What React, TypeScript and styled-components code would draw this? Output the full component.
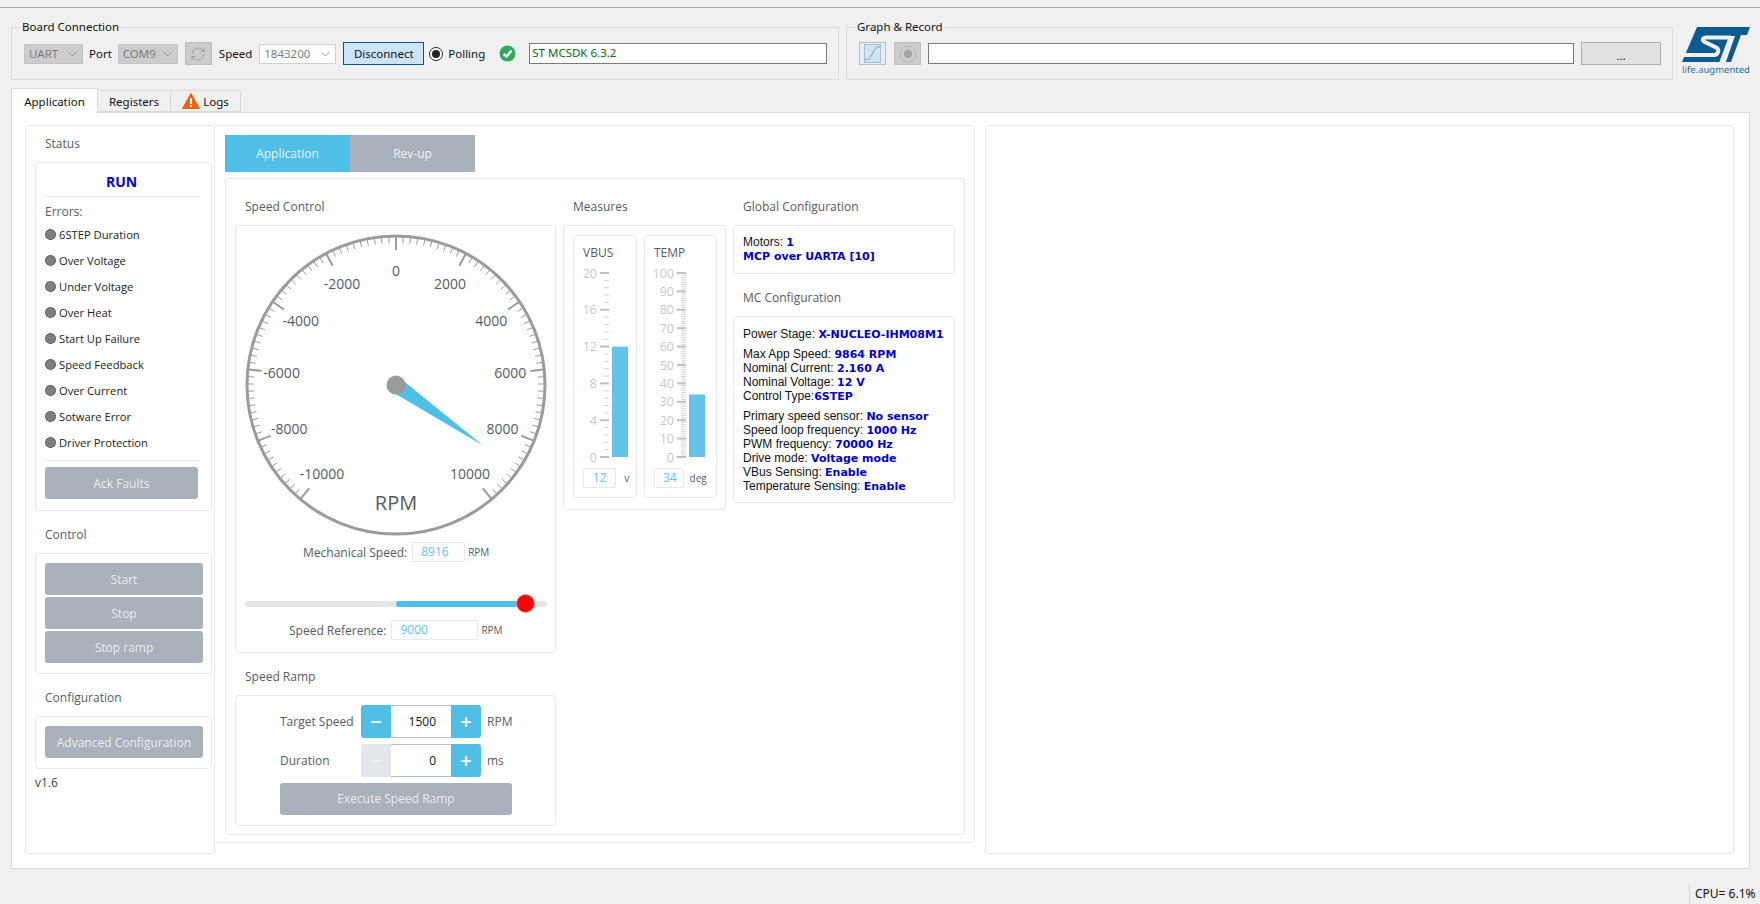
import React from 'react'
import styled, { createGlobalStyle } from 'styled-components'
import { RefreshCw } from 'lucide-react'

const GlobalStyle = createGlobalStyle`
  html, body { margin: 0; padding: 0; background: #f0f0f0; }
  * { box-sizing: border-box; }
`

const BLUE = '#4fbfe8'
const GREY_BTN = '#a9b1bc'
const LINE = '#e8e8e8'
const QT_FONT = `"Noto Sans", "Open Sans", sans-serif`
const WEB_FONT = `"Open Sans", "Noto Sans", sans-serif`

const Page = styled.div`
  width: 1760px;
  height: 904px;
  overflow: hidden;
  background: #f0f0f0;
  font-family: ${QT_FONT};
  font-size: 11.5px;
  color: #111;
`
const TopRule = styled.div`
  height: 8px;
  border-bottom: 1px solid #a8a8a8;
`
const Toolbar = styled.div`
  display: flex;
  align-items: flex-start;
  padding: 19px 0 0 11px;
  height: 72px;
`
const GroupBox = styled.div<{ $width: number; $ml?: number }>`
  position: relative;
  display: flex;
  align-items: center;
  width: ${p => p.$width}px;
  height: 53px;
  margin-left: ${p => p.$ml || 0}px;
  padding-left: 12px;
  border: 1px solid #dcdcdc;
`
const GroupLabel = styled.span`
  position: absolute;
  top: -9px;
  left: 8px;
  padding: 0 2px;
  line-height: 16px;
  background: #f0f0f0;
`
const Combo = styled.div<{ $width: number; $ml?: number; $white?: boolean }>`
  display: flex;
  align-items: center;
  justify-content: space-between;
  width: ${p => p.$width}px;
  height: 20px;
  margin-left: ${p => p.$ml || 0}px;
  padding: 0 5px 0 4px;
  background: ${p => (p.$white ? '#fff' : '#cccccc')};
  border: 1px solid ${p => (p.$white ? '#cfcfcf' : '#c4c4c4')};
  color: #7d7d7d;
`
const Caption = styled.span<{ $ml: number }>`
  margin-left: ${p => p.$ml}px;
`
const IconButton = styled.div<{ $ml: number; $active?: boolean }>`
  display: flex;
  align-items: center;
  justify-content: center;
  width: 27px;
  height: 23px;
  margin-left: ${p => p.$ml}px;
  background: ${p => (p.$active ? '#e4eef8' : '#cccccc')};
  border: 1px solid #bdbdbd;
  color: #8b8b8b;
`
const DisconnectButton = styled.div`
  display: flex;
  align-items: center;
  justify-content: center;
  width: 81px;
  height: 23px;
  margin-left: 7px;
  background: #cce4f7;
  border: 1px solid #005499;
`
const Radio = styled.span`
  display: flex;
  align-items: center;
  justify-content: center;
  width: 14px;
  height: 14px;
  margin-left: 5px;
  background: #fff;
  border: 1px solid #222;
  border-radius: 50%;
  &::after {
    content: '';
    width: 8px;
    height: 8px;
    border-radius: 50%;
    background: #222;
  }
`
const PathInput = styled.div<{ $width: number; $ml: number }>`
  width: ${p => p.$width}px;
  height: 21px;
  margin-left: ${p => p.$ml}px;
  padding-left: 2px;
  line-height: 18px;
  background: #fff;
  border: 1px solid #7a7a7a;
  color: #0a6a12;
`
const BrowseButton = styled.div`
  display: flex;
  align-items: center;
  justify-content: center;
  width: 80px;
  height: 23px;
  margin-left: 7px;
  padding-top: 3px;
  background: #e1e1e1;
  border: 1px solid #adadad;
`
const Logo = styled.div`
  display: flex;
  flex-direction: column;
  align-items: center;
  gap: 2px;
  width: 76px;
  margin-left: 5px;
  color: #2a6c9c;
  font-size: 9.5px;
  line-height: 10px;
`
const TabBar = styled.div`
  display: flex;
  align-items: flex-end;
  height: 24px;
  margin: 8px 0 0 11px;
`
const QtTab = styled.div<{ $width: number; $active?: boolean }>`
  display: flex;
  align-items: center;
  justify-content: center;
  gap: 3px;
  width: ${p => p.$width}px;
  height: ${p => (p.$active ? 25 : 22)}px;
  margin-bottom: ${p => (p.$active ? -1 : 0)}px;
  background: ${p => (p.$active ? '#fff' : '#f0f0f0')};
  border: 1px solid #d9d9d9;
  border-bottom: ${p => (p.$active ? 'none' : '1px solid #d9d9d9')};
  border-left: ${p => (p.$active ? '1px solid #d9d9d9' : 'none')};
  position: relative;
  z-index: ${p => (p.$active ? 1 : 0)};
`
const Pane = styled.div`
  display: flex;
  align-items: flex-start;
  width: 1739px;
  height: 757px;
  margin-left: 11px;
  padding: 12px 0 0 13px;
  background: #fff;
  border: 1px solid #d9d9d9;
  font-family: ${WEB_FONT};
  font-size: 12px;
  color: #222;
`
const SidePanel = styled.div`
  width: 190px;
  height: 729px;
  padding: 8px 0 0 9px;
  border: 1px solid ${LINE};
  border-radius: 3px;
`
const MainPanel = styled.div`
  width: 761px;
  height: 718px;
  margin-left: -1px;
  padding: 9px 0 0 10px;
  border: 1px solid ${LINE};
  border-radius: 3px;
`
const BlankPanel = styled.div`
  width: 749px;
  height: 729px;
  margin-left: 10px;
  border: 1px solid ${LINE};
  border-radius: 3px;
`
const SectionTitle = styled.div<{ $mt?: number }>`
  height: 19px;
  margin: ${p => p.$mt || 0}px 0 9px 10px;
  font-size: 12px;
  line-height: 19px;
  color: #555c64;
`
const Card = styled.div<{ $height: number; $width?: number; $pad?: string }>`
  width: ${p => (p.$width ? `${p.$width}px` : 'auto')};
  height: ${p => p.$height}px;
  padding: ${p => p.$pad || '9px'};
  border: 1px solid ${LINE};
  border-radius: 4px;
`
const RunState = styled.div`
  width: 153px;
  height: 25px;
  text-align: center;
  font-size: 14px;
  font-weight: 700;
  line-height: 20px;
  color: #0000d8;
  border-bottom: 1px solid ${LINE};
`
const ErrorsCaption = styled.div`
  height: 18px;
  margin-top: 6px;
  line-height: 18px;
  color: #555c64;
`
const ErrorRow = styled.div`
  display: flex;
  align-items: center;
  gap: 3px;
  height: 26px;
  font-size: 11.2px;
  color: #222;
`
const Led = styled.span`
  flex: none;
  width: 11px;
  height: 11px;
  border-radius: 50%;
  background: #7f7f7f;
  border: 1px solid #5c5c5c;
`
const ErrorsEnd = styled.div`
  width: 153px;
  margin-top: 5px;
  border-top: 1px solid ${LINE};
`
const GreyButton = styled.div<{ $width: number; $mt?: number }>`
  display: flex;
  align-items: center;
  justify-content: center;
  width: ${p => p.$width}px;
  height: 32px;
  margin-top: ${p => p.$mt || 0}px;
  background: ${GREY_BTN};
  border-radius: 3px;
  color: #e9ecef;
  font-size: 12px;
`
const Version = styled.div`
  margin-top: 6px;
  font-size: 12px;
  line-height: 16px;
  color: #444;
`
const InnerTabs = styled.div`
  display: flex;
  height: 37px;
`
const InnerTab = styled.div<{ $active?: boolean }>`
  display: flex;
  align-items: center;
  justify-content: center;
  width: 125px;
  background: ${p => (p.$active ? BLUE : GREY_BTN)};
  color: #eef3f6;
  font-size: 12px;
`
const TabBody = styled.div`
  display: flex;
  gap: 7px;
  width: 740px;
  height: 657px;
  margin-top: 6px;
  padding: 18px 0 0 9px;
  border: 1px solid ${LINE};
  border-radius: 3px;
`
const Column = styled.div<{ $width: number }>`
  width: ${p => p.$width}px;
`
const GaugeSvg = styled.svg`
  display: block;
  margin: 0 auto;
`
const GaugeLabel = styled.text<{ $size?: number }>`
  font-family: ${WEB_FONT};
  font-size: ${p => p.$size || 14}px;
  fill: #565b62;
  text-anchor: middle;
  dominant-baseline: central;
`
const ReadoutRow = styled.div<{ $pl: number; $mt: number }>`
  display: flex;
  align-items: center;
  height: 20px;
  margin-top: ${p => p.$mt}px;
  padding-left: ${p => p.$pl}px;
  color: #555c64;
`
const Readout = styled.div<{ $width: number; $center?: boolean }>`
  width: ${p => p.$width}px;
  height: 20px;
  margin: 0 3px 0 5px;
  padding: 0 8px;
  border: 1px solid ${LINE};
  border-radius: 2px;
  color: #62c3ea;
  font-size: 12px;
  line-height: 18px;
  text-align: ${p => (p.$center ? 'center' : 'left')};
`
const Unit = styled.span`
  font-size: 10px;
  color: #555c64;
`
const SliderTrack = styled.div`
  position: relative;
  width: 302px;
  height: 6px;
  margin: 39px 0 0 9px;
  background: #e4e4e4;
  border-radius: 3px;
`
const SliderFill = styled.div`
  position: absolute;
  top: 0;
  bottom: 0;
  background: ${BLUE};
  border-radius: 3px 0 0 3px;
`
const SliderThumb = styled.div`
  position: absolute;
  top: -7px;
  width: 19px;
  height: 19px;
  margin-left: -9.5px;
  background: #ff0000;
  border: 1px solid #d8a0a0;
  border-radius: 50%;
`
const RampRow = styled.div<{ $mt?: number }>`
  display: flex;
  align-items: center;
  height: 33px;
  margin-top: ${p => p.$mt || 0}px;
  padding-left: 44px;
  color: #555c64;
  font-size: 12px;
`
const RampLabel = styled.span`
  width: 81px;
`
const StepperSide = styled.div<{ $disabled?: boolean; $left?: boolean }>`
  display: flex;
  align-items: center;
  justify-content: center;
  width: 30px;
  height: 33px;
  background: ${p => (p.$disabled ? '#e3e6ea' : BLUE)};
  color: ${p => (p.$disabled ? '#f1f3f5' : '#fff')};
  border-radius: ${p => (p.$left ? '3px 0 0 3px' : '0 3px 3px 0')};
  font-size: 20px;
  font-weight: 600;
`
const StepperValue = styled.div`
  width: 60px;
  height: 33px;
  padding-right: 15px;
  border-top: 1px solid #b9bec4;
  border-bottom: 1px solid #b9bec4;
  color: #111;
  text-align: right;
  line-height: 31px;
`
const RampUnit = styled.span`
  margin-left: 6px;
`
const MeterRow = styled.div`
  display: flex;
  gap: 7px;
`
const MeterCard = styled.div<{ $width: number }>`
  width: ${p => p.$width}px;
  height: 263px;
  padding: 8px 0 0;
  border: 1px solid ${LINE};
  border-radius: 4px;
`
const MeterTitle = styled.div`
  height: 18px;
  padding-left: 9px;
  line-height: 18px;
  color: #555c64;
`
const MeterSvg = styled.svg`
  display: block;
  margin-top: 3px;
`
const MeterTick = styled.text`
  font-family: ${WEB_FONT};
  font-size: 12.5px;
  fill: #c9c9c9;
  text-anchor: end;
  dominant-baseline: central;
`
const MeterFoot = styled.div`
  display: flex;
  align-items: center;
  height: 20px;
  margin-top: 3px;
  padding-left: 4px;
`
const InfoBlock = styled.div<{ $mb?: number }>`
  margin-bottom: ${p => p.$mb || 0}px;
  font-family: "Liberation Sans", Arial, sans-serif;
  font-size: 12px;
  line-height: 14px;
  color: #111;
  white-space: nowrap;
`
const Strong = styled.b`
  font-family: "DejaVu Sans", Verdana, sans-serif;
  font-size: 11px;
  line-height: 0;
  color: #0000d0;
`
const StatusBar = styled.div`
  display: flex;
  justify-content: flex-end;
  height: 20px;
  margin-top: 15px;
`
const StatusCell = styled.div`
  width: 71px;
  padding-left: 5px;
  border-left: 1px solid #d4d4d4;
  font-size: 12px;
  line-height: 20px;
  white-space: nowrap;
`

const errors = [
  '6STEP Duration', 'Over Voltage', 'Under Voltage', 'Over Heat', 'Start Up Failure',
  'Speed Feedback', 'Over Current', 'Sotware Error', 'Driver Protection',
]

const GAUGE_C = 152
const polar = (deg: number, r: number) => {
  const a = (deg * Math.PI) / 180
  return { x: GAUGE_C + r * Math.sin(a), y: GAUGE_C - r * Math.cos(a) }
}

const Gauge = ({ value }: { value: number }) => {
  const ticks: React.ReactNode[] = []
  for (let v = -10000; v <= 10000; v += 200) {
    const deg = (v / 1000) * 14
    const major = v % 2000 === 0
    const p1 = polar(deg, 149)
    const p2 = polar(deg, major ? 135 : 142)
    ticks.push(
      <line key={v} x1={p1.x} y1={p1.y} x2={p2.x} y2={p2.y} stroke="#9b9b9b" strokeWidth={major ? 2 : 1} />
    )
  }
  const labels = []
  for (let v = -10000; v <= 10000; v += 2000) {
    const p = polar((v / 1000) * 14, 115)
    labels.push(<GaugeLabel key={v} x={p.x} y={p.y}>{v}</GaugeLabel>)
  }
  const deg = (value / 1000) * 14
  const tip = polar(deg, 106)
  const b1 = polar(deg + 90, 8)
  const b2 = polar(deg - 90, 8)
  return (
    <GaugeSvg width={304} height={304} viewBox="0 0 304 304">
      <circle cx={GAUGE_C} cy={GAUGE_C} r={149} fill="none" stroke="#9b9b9b" strokeWidth={3} />
      {ticks}
      {labels}
      <GaugeLabel x={GAUGE_C} y={GAUGE_C + 117} $size={20}>RPM</GaugeLabel>
      <polygon points={`${b1.x},${b1.y} ${tip.x},${tip.y} ${b2.x},${b2.y}`} fill={BLUE} />
      <circle cx={GAUGE_C} cy={GAUGE_C} r={9.5} fill="#9b9b9b" />
    </GaugeSvg>
  )
}

interface MeterProps {
  width: number
  max: number
  major: number
  subdiv: number
  value: number
  labelX: number
}

// labelX is the right edge of the scale numbers, ticks and the bar hang off it
const Meter = ({ width, max, major, subdiv, value, labelX }: MeterProps) => {
  const scale = 184
  const y = (v: number) => 192 - (v / max) * scale
  const step = major / subdiv
  const ticks = []
  for (let i = 0; i <= Math.round(max / step); i++) {
    const v = i * step
    const isMajor = i % subdiv === 0
    ticks.push(
      <line
        key={i}
        x1={labelX + (isMajor ? 3 : 7)}
        x2={labelX + 12}
        y1={y(v)}
        y2={y(v)}
        stroke={isMajor ? '#c0c0c0' : '#d4d4d4'}
        strokeWidth={isMajor ? 2 : 1}
      />
    )
    if (isMajor) ticks.push(<MeterTick key={`l${i}`} x={labelX} y={y(v)}>{v}</MeterTick>)
  }
  return (
    <MeterSvg width={width} height={200} viewBox={`0 0 ${width} 200`}>
      {ticks}
      <rect x={labelX + 15} y={y(value)} width={16} height={192 - y(value)} fill="#63c3e8" />
    </MeterSvg>
  )
}

const StLogo = () => (
  <svg width="70" height="36" viewBox="0 0 70 36">
    <path fill="#0c5a91" d="M16 0 H69 L66 8 H60 L50 35 H1 Z" />
    <path fill="#f0f0f0" d="M48 9 H54 L44.5 36 H38 Z" />
    <path
      fill="none"
      stroke="#f0f0f0"
      strokeWidth="4"
      d="M50 10.5 H25 C22 10.5 21 13 23 14.5 L36 21 C38.5 23 37 28 33 28 H2"
    />
  </svg>
)

const CheckBadge = () => (
  <svg width="17" height="17" viewBox="0 0 17 17" style={{ marginLeft: 14 }}>
    <circle cx="8.5" cy="8.5" r="8" fill="#2fa85c" />
    <path d="M4.5 8.8 L7.5 11.6 L12.5 5.6" fill="none" stroke="#fff" strokeWidth="2.4" />
  </svg>
)

const WarnIcon = () => (
  <svg width="18" height="16" viewBox="0 0 18 16">
    <path d="M9 0.5 L17.5 15.5 H0.5 Z" fill="#f4600f" stroke="#f4600f" strokeLinejoin="round" />
    <rect x="8" y="5" width="2" height="6" fill="#fff" />
    <rect x="8" y="12" width="2" height="2" fill="#fff" />
  </svg>
)

const Chevron = () => (
  <svg width="9" height="6" viewBox="0 0 9 6">
    <path d="M0.5 1 L4.5 5 L8.5 1" fill="none" stroke="#9a9a9a" />
  </svg>
)

export default function App() {
  return (
    <Page>
      <GlobalStyle />
      <TopRule />
      <Toolbar>
        <GroupBox $width={828}>
          <GroupLabel>Board Connection</GroupLabel>
          <Combo $width={59}>UART<Chevron /></Combo>
          <Caption $ml={6}>Port</Caption>
          <Combo $width={60} $ml={6}>COM9<Chevron /></Combo>
          <IconButton $ml={7}><RefreshCw size={16} strokeWidth={1} /></IconButton>
          <Caption $ml={7}>Speed</Caption>
          <Combo $width={77} $ml={7} $white>1843200<Chevron /></Combo>
          <DisconnectButton>Disconnect</DisconnectButton>
          <Radio />
          <Caption $ml={5}>Polling</Caption>
          <CheckBadge />
          <PathInput $width={298} $ml={13}>ST MCSDK 6.3.2</PathInput>
        </GroupBox>
        <GroupBox $width={827} $ml={7}>
          <GroupLabel>Graph &amp; Record</GroupLabel>
          <IconButton $ml={0} $active>
            <svg width="17" height="19" viewBox="0 0 17 19">
              <rect x="0.5" y="0.5" width="16" height="18" fill="#cfe3f5" stroke="#a9bfd2" />
              <path d="M1 15 C5 17 6 14 8.5 9.5 C11 5 12 2 16 3" fill="none" stroke="#6e9bc4" />
            </svg>
          </IconButton>
          <IconButton $ml={8}>
            <svg width="18" height="18" viewBox="0 0 18 18">
              <circle cx="9" cy="9" r="8" fill="none" stroke="#b4b4b4" />
              <circle cx="9" cy="9" r="4" fill="#a2a2a2" />
            </svg>
          </IconButton>
          <PathInput $width={646} $ml={7} />
          <BrowseButton>...</BrowseButton>
        </GroupBox>
        <Logo>
          <StLogo />
          life.augmented
        </Logo>
      </Toolbar>
      <TabBar>
        <QtTab $width={87} $active>Application</QtTab>
        <QtTab $width={73}>Registers</QtTab>
        <QtTab $width={70}><WarnIcon />Logs</QtTab>
      </TabBar>
      <Pane>
        <SidePanel>
          <SectionTitle>Status</SectionTitle>
          <Card $width={177} $height={349}>
            <RunState>RUN</RunState>
            <ErrorsCaption>Errors:</ErrorsCaption>
            {errors.map(e => (
              <ErrorRow key={e}><Led />{e}</ErrorRow>
            ))}
            <ErrorsEnd />
            <GreyButton $width={153} $mt={6}>Ack Faults</GreyButton>
          </Card>
          <SectionTitle $mt={14}>Control</SectionTitle>
          <Card $width={177} $height={121}>
            <GreyButton $width={158}>Start</GreyButton>
            <GreyButton $width={158} $mt={2}>Stop</GreyButton>
            <GreyButton $width={158} $mt={2}>Stop ramp</GreyButton>
          </Card>
          <SectionTitle $mt={14}>Configuration</SectionTitle>
          <Card $width={177} $height={53}>
            <GreyButton $width={158}>Advanced Configuration</GreyButton>
          </Card>
          <Version>v1.6</Version>
        </SidePanel>
        <MainPanel>
          <InnerTabs>
            <InnerTab $active>Application</InnerTab>
            <InnerTab>Rev-up</InnerTab>
          </InnerTabs>
          <TabBody>
            <Column $width={321}>
              <SectionTitle>Speed Control</SectionTitle>
              <Card $height={428} $pad="7px 0 0">
                <Gauge value={8916} />
                <ReadoutRow $pl={67} $mt={5}>
                  Mechanical Speed:
                  <Readout $width={53}>8916</Readout>
                  <Unit>RPM</Unit>
                </ReadoutRow>
                <SliderTrack>
                  <SliderFill style={{ left: 151, width: 129 }} />
                  <SliderThumb style={{ left: 280 }} />
                </SliderTrack>
                <ReadoutRow $pl={53} $mt={13}>
                  Speed Reference:
                  <Readout $width={87}>9000</Readout>
                  <Unit>RPM</Unit>
                </ReadoutRow>
              </Card>
              <SectionTitle $mt={14}>Speed Ramp</SectionTitle>
              <Card $height={131} $pad="9px 0 0">
                <RampRow>
                  <RampLabel>Target Speed</RampLabel>
                  <StepperSide $left>−</StepperSide>
                  <StepperValue>1500</StepperValue>
                  <StepperSide>+</StepperSide>
                  <RampUnit>RPM</RampUnit>
                </RampRow>
                <RampRow $mt={6}>
                  <RampLabel>Duration</RampLabel>
                  <StepperSide $left $disabled>−</StepperSide>
                  <StepperValue>0</StepperValue>
                  <StepperSide>+</StepperSide>
                  <RampUnit>ms</RampUnit>
                </RampRow>
                <RampRow $mt={5}>
                  <GreyButton $width={232}>Execute Speed Ramp</GreyButton>
                </RampRow>
              </Card>
            </Column>
            <Column $width={163}>
              <SectionTitle>Measures</SectionTitle>
              <Card $height={285}>
                <MeterRow>
                  <MeterCard $width={64}>
                    <MeterTitle>VBUS</MeterTitle>
                    <Meter width={62} max={20} major={4} subdiv={5} value={12} labelX={23} />
                    <MeterFoot>
                      <Readout $width={33} $center>12</Readout>
                      <Unit>&nbsp;&nbsp;v</Unit>
                    </MeterFoot>
                  </MeterCard>
                  <MeterCard $width={73}>
                    <MeterTitle>TEMP</MeterTitle>
                    <Meter width={71} max={100} major={10} subdiv={8} value={34} labelX={29} />
                    <MeterFoot>
                      <Readout $width={30} $center>34</Readout>
                      <Unit>&nbsp;deg</Unit>
                    </MeterFoot>
                  </MeterCard>
                </MeterRow>
              </Card>
            </Column>
            <Column $width={222}>
              <SectionTitle>Global Configuration</SectionTitle>
              <Card $height={49} $pad="9px 9px 0">
                <InfoBlock>
                  Motors: <Strong>1</Strong><br />
                  <Strong>MCP over UARTA [10]</Strong>
                </InfoBlock>
              </Card>
              <SectionTitle $mt={14}>MC Configuration</SectionTitle>
              <Card $height={187} $pad="10px 9px 0">
                <InfoBlock $mb={6}>Power Stage: <Strong>X-NUCLEO-IHM08M1</Strong></InfoBlock>
                <InfoBlock $mb={6}>
                  Max App Speed: <Strong>9864 RPM</Strong><br />
                  Nominal Current: <Strong>2.160 A</Strong><br />
                  Nominal Voltage: <Strong>12 V</Strong><br />
                  Control Type:<Strong>6STEP</Strong>
                </InfoBlock>
                <InfoBlock>
                  Primary speed sensor: <Strong>No sensor</Strong><br />
                  Speed loop frequency: <Strong>1000 Hz</Strong><br />
                  PWM frequency: <Strong>70000 Hz</Strong><br />
                  Drive mode: <Strong>Voltage mode</Strong><br />
                  VBus Sensing: <Strong>Enable</Strong><br />
                  Temperature Sensing: <Strong>Enable</Strong>
                </InfoBlock>
              </Card>
            </Column>
          </TabBody>
        </MainPanel>
        <BlankPanel />
      </Pane>
      <StatusBar>
        <StatusCell>CPU= 6.1%</StatusCell>
      </StatusBar>
    </Page>
  )
}
